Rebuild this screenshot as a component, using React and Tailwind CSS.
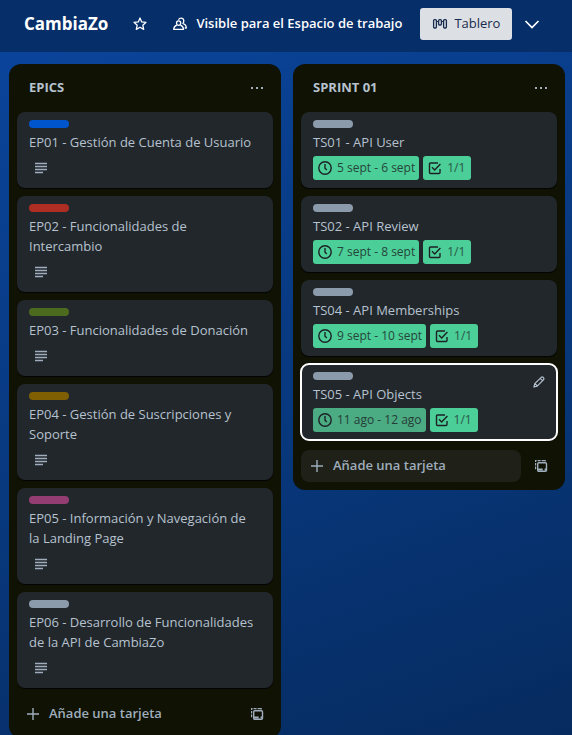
import React from "react";

const epics = [
  { title: "EP01 - Gestión de Cuenta de Usuario", label: "bg-[#0055cc]" },
  { title: "EP02 - Funcionalidades de Intercambio", label: "bg-[#ae2e24]" },
  { title: "EP03 - Funcionalidades de Donación", label: "bg-[#4c6b1f]" },
  { title: "EP04 - Gestión de Suscripciones y Soporte", label: "bg-[#7f5f01]" },
  { title: "EP05 - Información y Navegación de la Landing Page", label: "bg-[#943d73]" },
  { title: "EP06 - Desarrollo de Funcionalidades de la API de CambiaZo", label: "bg-[#8c9bab]" },
];

const sprint = [
  { title: "TS01 - API User", label: "bg-[#8c9bab]", date: "5 sept - 6 sept" },
  { title: "TS02 - API Review", label: "bg-[#8c9bab]", date: "7 sept - 8 sept" },
  { title: "TS04 - API Memberships", label: "bg-[#8c9bab]", date: "9 sept - 10 sept" },
  { title: "TS05 - API Objects", label: "bg-[#8c9bab]", date: "11 ago - 12 ago", focused: true },
];

function Icon({ children }) {
  return (
    <svg
      viewBox="0 0 16 16"
      fill="none"
      stroke="currentColor"
      strokeWidth="1.4"
      aria-hidden="true"
      className="size-4 shrink-0"
    >
      {children}
    </svg>
  );
}

const StarIcon = () => (
  <Icon>
    <path d="M8 2l1.700 3.900 4.300.4-3.200 2.900.9 4.200L8 11.300l-3.700 2.100.9-4.200L2 6.300l4.300-.4z" strokeLinejoin="round" strokeWidth="1.300" />
  </Icon>
);

const PeopleIcon = () => (
  <Icon>
    <g strokeWidth="1.300" strokeLinejoin="round">
      <path d="M6.600 4.800c1.300 0 2.100 1 2.100 2.200S7.900 9.300 6.600 9.300 4.500 8.200 4.500 7s.8-2.200 2.100-2.200z" />
      <path d="M4.800 9.100C3 9.800 1.700 11.300 1.700 13.300h9.800c0-2-1.300-3.500-3.100-4.200" />
      <path d="M6.500 3.800c.5-1.100 1.500-1.700 2.600-1.700 1.600 0 2.700 1.300 2.700 3 0 1-.3 1.700-.9 2.300 2 .8 3.400 2.400 3.400 4.600h-1.500" />
    </g>
  </Icon>
);

const BoardIcon = () => (
  <Icon>
    <g strokeWidth="1.300">
      <rect x="1.600" y="3.600" width="2.800" height="8.400" rx="1" />
      <rect x="6.600" y="3.600" width="2.800" height="5.400" rx="1" />
      <rect x="11.600" y="3.600" width="2.800" height="8.400" rx="1" />
      <path d="M4.400 4.600l2.200 1.800M9.400 6.400l2.200-1.800" strokeWidth="1" />
    </g>
  </Icon>
);

const DescriptionIcon = () => (
  <Icon>
    <path d="M2 3.500h12M2 6.500h12M2 9.500h12M2 12.500h8" strokeWidth="1.300" />
  </Icon>
);

const ClockIcon = () => (
  <Icon>
    <circle cx="8" cy="8" r="6.200" />
    <path d="M8 4v4.200l1.800 1.800" />
  </Icon>
);

const CheckIcon = () => (
  <Icon>
    <path d="M11 3H3.500a1 1 0 0 0-1 1v8.500a1 1 0 0 0 1 1H12a1 1 0 0 0 1-1V9" />
    <path d="M5 7.200l2.700 2.700L13.400 4.100" />
  </Icon>
);

const TemplateIcon = () => (
  <Icon>
    <rect x="4.700" y="4.700" width="8.800" height="8.600" rx="1" />
    <path d="M4.700 11.500h5M11.600 11.500h2" strokeWidth="1.800" />
    <path d="M2 2.600h1.600M4.600 2.600h3M8.600 2.600h3M2.600 2v2M2.600 5v2.600M2.600 8.600v2.600M12.200 2v1.400" strokeWidth="1.200" />
  </Icon>
);

const PencilIcon = () => (
  <Icon>
    <path d="M2.900 13l.9-3.300 6.400-6.400a1.300 1.300 0 0 1 1.800 0l.6.6a1.300 1.300 0 0 1 0 1.800L6.200 12.100zM4 9.600l2.300 2.300M9.300 4.400l2.200 2.200" strokeWidth="1.200" strokeLinejoin="round" />
  </Icon>
);

function Card({ card }) {
  return (
    <li
      className={`flex flex-col gap-1 rounded-lg bg-[#22272b] px-3 py-2 shadow-[0_1px_1px_#030404] ${
        card.focused ? "outline-2 -outline-offset-1 outline-white" : ""
      }`}
    >
      <div className="flex h-2 items-start justify-between">
        <span className={`h-2 w-10 rounded-full ${card.label}`} />
        {card.focused && (
          <button type="button" aria-label="Editar tarjeta" className="-mr-1 p-0.5 text-[#b6c2cf]">
            <PencilIcon />
          </button>
        )}
      </div>
      <h3 className="pr-1 text-[13px] leading-5 text-[#b6c2cf]">{card.title}</h3>
      {card.date ? (
        <div className="flex gap-1 text-xs text-[#1d2125]">
          <span
            className={`flex h-6 items-center gap-1 rounded-[3px] px-1 ${
              card.focused ? "bg-[#4bab82]" : "bg-[#4bce97]"
            }`}
          >
            <ClockIcon />
            <span className="opacity-80">{card.date}</span>
          </span>
          <span className="flex h-6 items-center gap-1 rounded-[3px] bg-[#4bce97] pr-1.5 pl-1">
            <CheckIcon />
            <span className="opacity-70">1/1</span>
          </span>
        </div>
      ) : (
        <div className="flex h-6 items-center px-1 text-[#9fadbc]">
          <DescriptionIcon />
        </div>
      )}
    </li>
  );
}

function List({ title, cards, hovered }) {
  return (
    <section className="w-68 shrink-0 rounded-xl bg-[#101204] p-2 text-[#9fadbc]">
      <header className="flex h-8 items-center justify-between px-3">
        <h2 className="text-[13px] font-bold text-[#b6c2cf]">{title}</h2>
        <button type="button" aria-label="Acciones de la lista" className="-mr-1">
          <Icon>
            <path d="M2 8h2M7 8h2M12 8h2" strokeWidth="2" />
          </Icon>
        </button>
      </header>
      <ol className="mt-2 flex flex-col gap-2">
        {cards.map((card) => (
          <Card key={card.title} card={card} />
        ))}
      </ol>
      <footer className="mt-2.5 flex items-center gap-1">
        <button
          type="button"
          className={`flex h-8 grow items-center gap-2 rounded-lg px-2 text-[13px] font-semibold ${
            hovered ? "bg-[#1f2118]" : ""
          }`}
        >
          <Icon>
            <path d="M8 2v12M2 8h12" />
          </Icon>
          {"Añade una tarjeta"}
        </button>
        <button type="button" aria-label="Crear desde plantilla" className="p-2">
          <TemplateIcon />
        </button>
      </footer>
    </section>
  );
}

export default function App() {
  return (
    <div className="flex h-screen flex-col overflow-hidden bg-linear-[160deg] from-[#0a459d] via-[#08387d] via-55% to-[#062b5f] font-['Open_Sans','Noto_Sans',sans-serif]">
      <header className="flex h-13 shrink-0 items-center bg-[#062e69] pb-1 pl-6 text-white">
        <h1 className="text-[17px] font-bold">CambiaZo</h1>
        <button type="button" aria-label="Marcar con estrella" className="ml-4 p-2">
          <StarIcon />
        </button>
        <button type="button" className="ml-2 flex h-8 items-center gap-2 px-2 text-[13px] font-semibold whitespace-nowrap">
          <PeopleIcon />
          Visible para el Espacio de trabajo
        </button>
        <button
          type="button"
          className="ml-2.5 flex h-8 items-center gap-1.5 rounded-[3px] bg-[#dcdfe4] px-3 text-[13px] text-[#172b4d]"
        >
          <BoardIcon />
          Tablero
        </button>
        <button type="button" aria-label="Más vistas" className="ml-3">
          <Icon>
            <path d="M1.500 5L8 11.500 14.500 5" strokeWidth="1.700" />
          </Icon>
        </button>
      </header>
      <main className="flex grow items-start gap-3 px-[9px] pt-3">
        <List title="EPICS" cards={epics} />
        <List title="SPRINT 01" cards={sprint} hovered />
      </main>
    </div>
  );
}
